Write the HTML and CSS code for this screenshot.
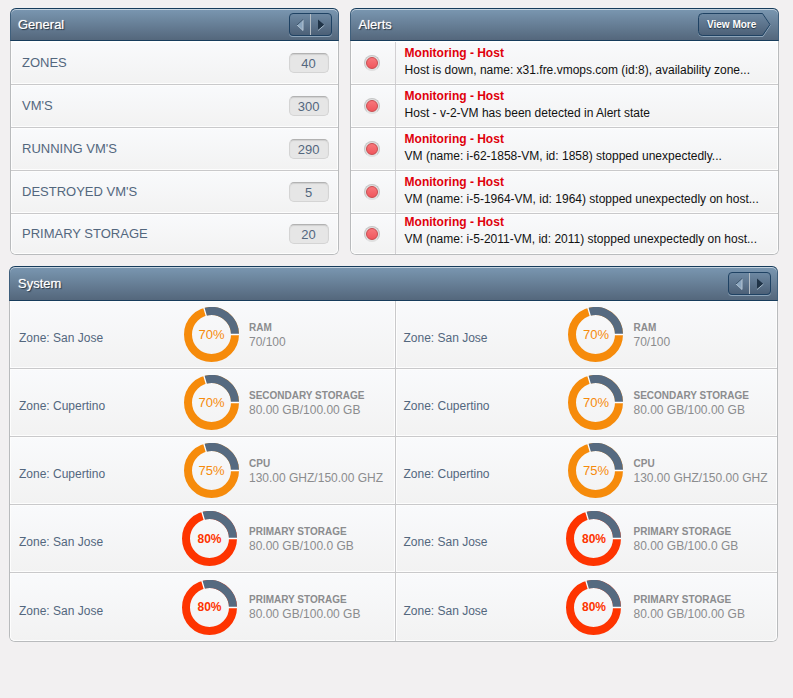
FILE: index.html
```html
<!DOCTYPE html>
<html lang="en">
<head>
<meta charset="utf-8">
<title>Dashboard</title>
<link rel="stylesheet" href="styles.css">
</head>
<body>
<svg class="defs" aria-hidden="true">
  <symbol id="prev" viewBox="0 0 8 12"><path d="M7 .5 1 6l6 5.500z" fill="#8ba6bf"/><path d="M1 6l6 5.500V1" fill="none" stroke="#b4c4d2"/><path d="M7 .5 1 6" stroke="#3b5269"/></symbol>
  <symbol id="next" viewBox="0 0 8 12"><path d="M1 .5 7.500 6 1 11.500z" fill="#1f3347"/><path d="M1 11.500 7.500 6" stroke="#a9bbcb"/></symbol>
  <symbol id="ring" viewBox="0 0 55 55">
    <circle cx="27.5" cy="27.5" r="23.5" fill="none" stroke="currentColor" stroke-width="8"/>
    <path d="M51 27.500A23.500 23.500 0 0 0 21 4.900" fill="none" stroke="#566a80" stroke-width="8"/>
    <path d="M46.500 27.500H55M22.400 9.400 19.800 .5" stroke="#fff" stroke-width="1.300"/>
  </symbol>
</svg>
<main class="dashboard">
  <div class="top">
    <section class="panel general">
      <header class="bar">
        <h2>General</h2>
        <div class="pager">
          <button type="button" aria-label="Previous"><svg><use href="#prev"/></svg></button>
          <button type="button" aria-label="Next"><svg><use href="#next"/></svg></button>
        </div>
      </header>
      <ul class="rows">
        <li class="row stat"><span>ZONES</span><b class="count">40</b></li>
        <li class="row stat"><span>VM'S</span><b class="count">300</b></li>
        <li class="row stat"><span>RUNNING VM'S</span><b class="count">290</b></li>
        <li class="row stat"><span>DESTROYED VM'S</span><b class="count">5</b></li>
        <li class="row stat"><span>PRIMARY STORAGE</span><b class="count">20</b></li>
      </ul>
    </section>
    <section class="panel alerts">
      <header class="bar">
        <h2>Alerts</h2>
        <a class="more" href="#alerts"><svg viewBox="0 0 74 24" aria-hidden="true">
          <defs><linearGradient id="tab" x2="0" y2="1"><stop stop-color="#6d88a2"/><stop offset="1" stop-color="#4c6077"/></linearGradient></defs>
          <path d="M4.500 1.500H65L72.500 12 65 23.500H4.500Q.5 23.500 .5 19.500V5.500Q.5 1.500 4.500 1.500Z" fill="none" stroke="#8da4b9"/>
          <path d="M4.500 .5H64.500L72 11.500 64.500 22.500H4.500Q.5 22.500 .5 18.500V4.500Q.5 .5 4.500 .5Z" fill="url(#tab)" stroke="#1f4263"/>
        </svg><span>View More</span></a>
      </header>
      <ul class="rows" id="alerts">
        <li class="row alert"><i class="light"></i><div class="message"><strong>Monitoring - Host</strong><p>Host is down, name: x31.fre.vmops.com (id:8), availability zone...</p></div></li>
        <li class="row alert"><i class="light"></i><div class="message"><strong>Monitoring - Host</strong><p>Host - v-2-VM has been detected in Alert state</p></div></li>
        <li class="row alert"><i class="light"></i><div class="message"><strong>Monitoring - Host</strong><p>VM (name: i-62-1858-VM, id: 1858) stopped unexpectedly...</p></div></li>
        <li class="row alert"><i class="light"></i><div class="message"><strong>Monitoring - Host</strong><p>VM (name: i-5-1964-VM, id: 1964) stopped unexpectedly on host...</p></div></li>
        <li class="row alert"><i class="light"></i><div class="message"><strong>Monitoring - Host</strong><p>VM (name: i-5-2011-VM, id: 2011) stopped unexpectedly on host...</p></div></li>
      </ul>
    </section>
  </div>
  <section class="panel system">
    <header class="bar">
      <h2>System</h2>
      <div class="pager">
        <button type="button" aria-label="Previous"><svg><use href="#prev"/></svg></button>
        <button type="button" aria-label="Next"><svg><use href="#next"/></svg></button>
      </div>
    </header>
    <div class="zones">
      <div class="zone"><span class="place">Zone: San Jose</span><div class="chart"><svg><use href="#ring"/></svg><b>70%</b></div><div class="usage"><h3>RAM</h3><p>70/100</p></div></div>
      <div class="zone"><span class="place">Zone: San Jose</span><div class="chart"><svg><use href="#ring"/></svg><b>70%</b></div><div class="usage"><h3>RAM</h3><p>70/100</p></div></div>
      <div class="zone"><span class="place">Zone: Cupertino</span><div class="chart"><svg><use href="#ring"/></svg><b>70%</b></div><div class="usage"><h3>SECONDARY STORAGE</h3><p>80.00 GB/100.00 GB</p></div></div>
      <div class="zone"><span class="place">Zone: Cupertino</span><div class="chart"><svg><use href="#ring"/></svg><b>70%</b></div><div class="usage"><h3>SECONDARY STORAGE</h3><p>80.00 GB/100.00 GB</p></div></div>
      <div class="zone"><span class="place">Zone: Cupertino</span><div class="chart"><svg><use href="#ring"/></svg><b>75%</b></div><div class="usage"><h3>CPU</h3><p>130.00 GHZ/150.00 GHZ</p></div></div>
      <div class="zone"><span class="place">Zone: Cupertino</span><div class="chart"><svg><use href="#ring"/></svg><b>75%</b></div><div class="usage"><h3>CPU</h3><p>130.00 GHZ/150.00 GHZ</p></div></div>
      <div class="zone critical"><span class="place">Zone: San Jose</span><div class="chart"><svg><use href="#ring"/></svg><b>80%</b></div><div class="usage"><h3>PRIMARY STORAGE</h3><p>80.00 GB/100.0 GB</p></div></div>
      <div class="zone critical"><span class="place">Zone: San Jose</span><div class="chart"><svg><use href="#ring"/></svg><b>80%</b></div><div class="usage"><h3>PRIMARY STORAGE</h3><p>80.00 GB/100.0 GB</p></div></div>
      <div class="zone critical"><span class="place">Zone: San Jose</span><div class="chart"><svg><use href="#ring"/></svg><b>80%</b></div><div class="usage"><h3>PRIMARY STORAGE</h3><p>80.00 GB/100.00 GB</p></div></div>
      <div class="zone critical"><span class="place">Zone: San Jose</span><div class="chart"><svg><use href="#ring"/></svg><b>80%</b></div><div class="usage"><h3>PRIMARY STORAGE</h3><p>80.00 GB/100.00 GB</p></div></div>
    </div>
  </section>
</main>
</body>
</html>
```
FILE: styles.css
```css
* { box-sizing: border-box; }
body {
  margin: 0;
  background: #f2f0f1;
  font: 12px/16px "Liberation Sans", Arial, sans-serif;
  color: #53677e;
}
h2, h3, p, ul { margin: 0; padding: 0; }
ul { list-style: none; }
svg { display: block; }
.defs { position: absolute; width: 0; height: 0; }

.dashboard { padding: 8px 14px 8px 9px; }
.top {
  display: grid;
  grid-template-columns: 329fr 430fr;
  gap: 11px;
  padding-left: 1px;
  margin-bottom: 11px;
}
.system { margin-right: 1px; }

.panel {
  border: 1px solid #b9bbbd;
  border-top: 0;
  border-radius: 6px;
  background: #fff;
}
.bar {
  display: flex;
  align-items: center;
  justify-content: space-between;
  height: 33px;
  margin: 0 -1px;
  padding: 0 6px 0 8px;
  border: 1px solid #3f5f7c;
  border-top-color: #173c5c;
  border-bottom-color: #173c5c;
  border-radius: 6px 6px 0 0;
  background: linear-gradient(#7a97b1, #54677c);
  box-shadow: inset 0 1px 0 #c5d3df;
}
.bar h2 {
  font-size: 13px;
  font-weight: 400;
  color: #fff;
  text-shadow: 1px 1px 1px #26333f, 0 0 1px #fff;
}
.general .bar { padding-left: 7px; }

.system .bar { height: 35px; }

.pager {
  display: flex;
  height: 23px;
  border: 1px solid #1f4263;
  border-radius: 4px;
  background: linear-gradient(#6d88a2, #4c6077);
  box-shadow: 0 1px 0 #8da4b9;
}
.pager button {
  display: flex;
  align-items: center;
  justify-content: center;
  width: 20px;
  padding: 0;
  border: 0;
  background: none;
}
.pager button + button { width: 21px; border-left: 1px solid #b4bdc5; }
.pager svg { width: 8px; height: 12px; }

.more {
  position: relative;
  width: 74px;
  height: 24px;
  padding-left: 9px;
  color: #fff;
  font-size: 10px;
  font-weight: 700;
  line-height: 24px;
  text-decoration: none;
  text-shadow: 0 1px 1px #26333f;
}
.more svg { position: absolute; inset: 0; width: 100%; height: 100%; }
.more span { position: relative; }

.rows { padding-top: 1px; }
.row {
  display: flex;
  height: 43px;
  border-bottom: 1px solid #c9c9cb;
  background: linear-gradient(#f9fafc, #f2f2f2);
  box-shadow: inset 0 0 0 1px #fdfdfd;
}
.row:last-child { height: 40px; border-bottom: 0; border-radius: 0 0 5px 5px; }

.stat {
  align-items: center;
  justify-content: space-between;
  padding: 0 9px 0 11px;
  font-size: 13px;
}
.count {
  width: 40px;
  height: 20px;
  border: 1px solid #d4d4d4;
  border-top-color: #b2b2b2;
  border-radius: 5px;
  background: #e6e6e6;
  box-shadow: inset 0 1px 1px #cfcfcf;
  font-weight: 400;
  line-height: 20px;
  text-align: center;
}

.alert { align-items: stretch; }
.light {
  display: grid;
  place-items: center;
  align-self: center;
  flex: none;
  width: 16px;
  height: 16px;
  margin: 0 15px 0 13px;
  border: 1px solid #c6c6c6;
  border-bottom-color: #e0e0e0;
  border-radius: 50%;
  background: #e0e0e0;
}
.light::before {
  content: "";
  width: 10px;
  height: 10px;
  border: 1px solid #c94a4e;
  border-radius: 50%;
  background: linear-gradient(#f8777b, #f0575d);
}
.message {
  flex: 1;
  min-width: 0;
  padding: 3px 0 0 9px;
  border-left: 1px solid #d2d0d3;
  line-height: 17px;
  color: #111;
}
.row:last-child .message { padding-top: 0; }
.message strong { display: block; color: #e0000b; }
.message p { white-space: nowrap; }

.zones { display: grid; grid-template-columns: 387fr 381fr; }
.zone {
  display: flex;
  align-items: center;
  height: 68px;
  padding-left: 7px;
  border-bottom: 1px solid #c9c9cb;
  background: linear-gradient(#f9fafc, #f2f2f2);
  box-shadow: inset 0 0 0 1px #fdfdfd;
}
.zone:nth-child(odd) { padding-left: 9px; border-right: 1px solid #c9c9cb; }
.zone:nth-last-child(-n+2) { border-bottom: 0; }
.zone:nth-last-child(2) { border-bottom-left-radius: 5px; }
.zone:last-child { border-bottom-right-radius: 5px; }
.place { width: 165px; padding-top: 7px; }
.chart {
  display: grid;
  place-items: center;
  width: 55px;
  margin-right: 10px;
  color: #f68b0b;
}
.chart > * { grid-area: 1 / 1; }
.chart svg { width: 55px; height: 55px; }
.chart b { font-size: 13px; font-weight: 400; }
.critical .place { width: 163px; }
.critical .chart { margin-right: 12px; color: #fe3400; }
.critical .chart b { font-size: 12px; font-weight: 700; }
.usage { color: #8b8c8e; line-height: 15px; }
.usage h3 { font-size: 10px; line-height: 15px; }
.usage p { white-space: nowrap; }
```
